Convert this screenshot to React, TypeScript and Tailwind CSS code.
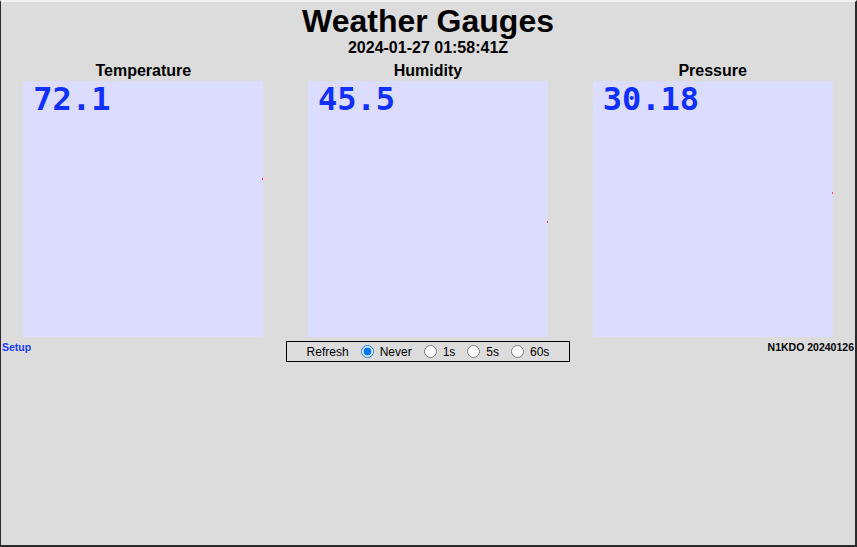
const gauges = [
  { label: 'Temperature', value: '72.1', mark: 97 },
  { label: 'Humidity', value: '45.5', mark: 140 },
  { label: 'Pressure', value: '30.18', mark: 111 },
];

const refresh = [
  { label: 'Never', checked: true },
  { label: '1s', checked: false },
  { label: '5s', checked: false },
  { label: '60s', checked: false },
];

function Gauge({ label, value, mark }: { label: string; value: string; mark: number }) {
  return (
    <div className="flex flex-col items-center">
      <div className="mt-[23px] text-[16px] leading-[18px] font-bold text-black">{label}</div>
      <div className="relative mt-px w-[240px] h-[256px] bg-[#dcdcff]">
        <div className="pl-[10px] text-[32px] leading-[36px] font-bold text-[#1030ff] font-['DejaVu_Sans_Mono',monospace]">
          {value}
        </div>
        {/* needle tip from the canvas */}
        <div className="absolute right-0 w-px h-[2px] bg-[#ff3d6e]" style={{ top: mark }} />
      </div>
    </div>
  );
}

export default function App() {
  return (
    <div className="w-[857px] h-[547px] bg-[#dcdcdc] border-l border-r-2 border-b-2 border-t-2 border-[#2a2a2a] border-t-[#f2f2f2] font-['Liberation_Sans',Arial,sans-serif] text-black">
      <div className="pt-px text-center text-[32px] leading-[36px] font-bold">Weather Gauges</div>
      <div className="text-center text-[16px] leading-[18px] font-bold">2024-01-27 01:58:41Z</div>

      <div className="grid grid-cols-3 -mt-[18px]">
        {gauges.map(g => (
          <Gauge key={g.label} {...g} />
        ))}
      </div>

      {/* footer */}
      <div className="grid grid-cols-3 mt-[4px] items-start">
        <a className="pl-px text-[10.5px] leading-[12px] font-bold text-[#1a3cff]">Setup</a>
        <div className="flex items-center justify-center h-[21px] border border-black text-[12px] leading-[14px]">
          <span className="mr-[12px]">Refresh</span>
          {refresh.map((r, i) => (
            <label key={r.label} className="flex items-center">
              <input
                type="radio"
                name="refresh"
                defaultChecked={r.checked}
                className="m-0 w-[13px] h-[13px]"
              />
              <span className={`ml-[6px] ${i < refresh.length - 1 ? 'mr-[12px]' : ''}`}>{r.label}</span>
            </label>
          ))}
        </div>
        <div className="pr-px text-right text-[10.5px] leading-[12px] font-bold">N1KDO 20240126</div>
      </div>
    </div>
  );
}
